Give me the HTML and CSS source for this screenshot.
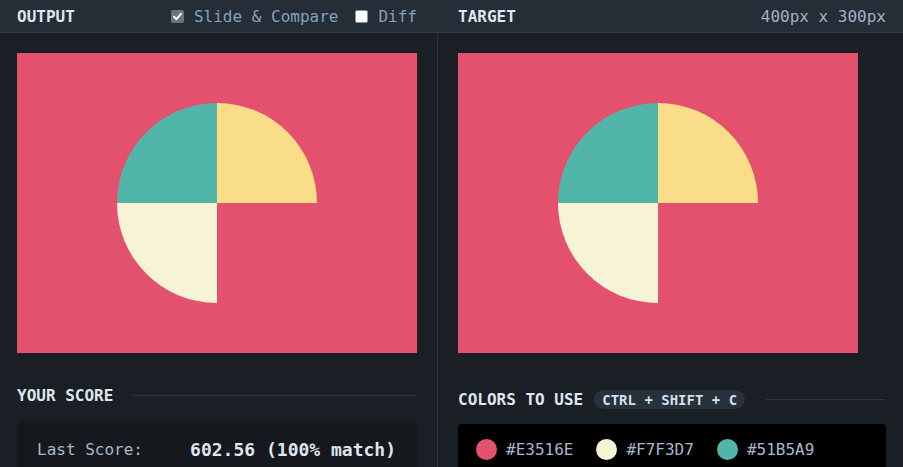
FILE: index.html
```html
<!DOCTYPE html>
<html>
<head>
<meta charset="utf-8">
<link rel="stylesheet" href="styles.css">
</head>
<body>
<div class="app">
  <section class="panel panel-left">
    <header class="bar">
      <h2 class="title">OUTPUT</h2>
      <div class="opts">
        <label class="opt"><span class="box box-on"><svg viewBox="0 0 13 13" width="13" height="13"><path d="M3 6.8 L5.4 9.2 L10 3.8" fill="none" stroke="#fff" stroke-width="2" stroke-linecap="round" stroke-linejoin="round"/></svg></span>Slide &amp; Compare</label>
        <label class="opt opt-diff"><span class="box box-off"></span>Diff</label>
      </div>
    </header>
    <div class="canvas">
      <svg viewBox="0 0 400 300" width="400" height="300">
        <rect width="400" height="300" fill="#E3516E"/>
        <path d="M200 150 L100 150 A100 100 0 0 1 200 50 Z" fill="#51B5A9"/>
        <path d="M200 150 L200 50 A100 100 0 0 1 300 150 Z" fill="#FADD89"/>
        <path d="M200 150 L200 250 A100 100 0 0 1 100 150 Z" fill="#F7F3D7"/>
      </svg>
    </div>
    <div class="section-head head-score">
      <h3 class="title">YOUR SCORE</h3>
      <span class="rule"></span>
    </div>
    <div class="score-box">
      <span class="score-label">Last Score:</span>
      <span class="score-value">602.56 (100% match)</span>
    </div>
  </section>
  <section class="panel panel-right">
    <header class="bar">
      <h2 class="title">TARGET</h2>
      <span class="dims">400px x 300px</span>
    </header>
    <div class="canvas">
      <svg viewBox="0 0 400 300" width="400" height="300">
        <rect width="400" height="300" fill="#E3516E"/>
        <path d="M200 150 L100 150 A100 100 0 0 1 200 50 Z" fill="#51B5A9"/>
        <path d="M200 150 L200 50 A100 100 0 0 1 300 150 Z" fill="#FADD89"/>
        <path d="M200 150 L200 250 A100 100 0 0 1 100 150 Z" fill="#F7F3D7"/>
      </svg>
    </div>
    <div class="section-head head-colors">
      <h3 class="title">COLORS TO USE</h3>
      <span class="kbd">CTRL + SHIFT + C</span>
      <span class="rule"></span>
    </div>
    <div class="colors-box">
      <div class="swatch"><span class="dot dot-pink"></span>#E3516E</div>
      <div class="swatch"><span class="dot dot-cream"></span>#F7F3D7</div>
      <div class="swatch"><span class="dot dot-teal"></span>#51B5A9</div>
    </div>
  </section>
</div>
</body>
</html>
```

FILE: styles.css
```css
* { box-sizing: border-box; }
html, body {
  margin: 0;
  padding: 0;
  background: #1a1e25;
  overflow: hidden;
}
body {
  font-family: "DejaVu Sans Mono", "Liberation Mono", monospace;
  color: #dfe6ee;
  width: 903px;
  height: 467px;
}
.app {
  display: flex;
  height: 467px;
}
.panel {
  display: flex;
  flex-direction: column;
  overflow: hidden;
}
.panel > * { flex-shrink: 0; }
.panel-left {
  width: 438px;
  border-right: 1px solid #2c333d;
}
.panel-right {
  flex: 1;
}
.bar {
  height: 33px;
  background: #252d37;
  border-bottom: 1px solid #323a45;
  display: flex;
  align-items: center;
  justify-content: space-between;
}
.panel-left .bar { padding: 0 20px 0 17px; }
.panel-right .bar { padding: 0 17px 0 20px; }
.title {
  margin: 0;
  font-size: 16px;
  font-weight: bold;
  color: #dfe6ee;
}
.opts {
  display: flex;
  align-items: center;
}
.opt {
  display: flex;
  align-items: center;
  font-size: 16px;
  color: #86a1bd;
  gap: 10px;
}
.opt-diff { margin-left: 17px; }
.box {
  width: 13px;
  height: 13px;
  border-radius: 2px;
  display: block;
}
.box svg { display: block; }
.box-on { background: #6b737d; }
.box-off { background: #ffffff; border: 1px solid #8a929c; }
.dims {
  font-size: 16px;
  color: #a3b1c1;
}
.canvas {
  margin-top: 20px;
  height: 300px;
}
.panel-left .canvas { margin-left: 17px; }
.panel-right .canvas { margin-left: 20px; }
.canvas svg { display: block; }
.section-head {
  display: flex;
  align-items: center;
}
.head-score {
  margin: 32px 20px 0 17px;
  height: 20px;
}
.head-colors {
  margin: 37px 17px 0 20px;
  height: 19px;
}
.rule {
  flex: 1;
  height: 1px;
  background: #2d343e;
}
.head-score .rule { margin-left: 20px; }
.head-colors .rule { margin-left: 21px; }
.kbd {
  margin-left: 11px;
  height: 19px;
  padding: 0 8px;
  border-radius: 10px;
  background: #27313b;
  font-size: 14px;
  font-weight: bold;
  color: #d6dee8;
  display: flex;
  align-items: center;
}
.score-box {
  margin: 16px 20px 0 17px;
  background: #15181d;
  border-radius: 5px;
  height: 80px;
  padding: 16px 21px 0 20px;
  display: flex;
  justify-content: space-between;
  align-items: flex-start;
}
.score-label {
  font-size: 16px;
  color: #a7b8cb;
  line-height: 26px;
}
.score-value {
  font-size: 18px;
  font-weight: bold;
  color: #dfe6ee;
  line-height: 26px;
}
.colors-box {
  margin: 15px 17px 0 20px;
  background: #000000;
  border-radius: 4px;
  height: 80px;
  padding: 14px 18px 0 18px;
  display: flex;
  align-items: flex-start;
  gap: 23px;
}
.swatch {
  display: flex;
  align-items: center;
  gap: 9px;
  font-size: 16px;
  color: #a6b7ca;
  height: 22px;
}
.dot {
  width: 21px;
  height: 21px;
  border-radius: 50%;
  display: block;
}
.dot-pink { background: #E3516E; }
.dot-cream { background: #F7F3D7; }
.dot-teal { background: #51B5A9; }
```
